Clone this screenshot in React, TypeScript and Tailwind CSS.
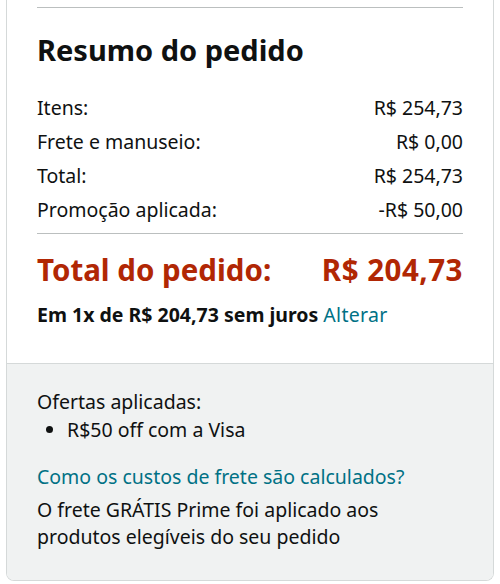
import React from "react";

const rows = [
  { label: "Itens:", value: "R$ 254,73" },
  { label: "Frete e manuseio:", value: "R$ 0,00" },
  { label: "Total:", value: "R$ 254,73" },
  { label: "Promoção aplicada:", value: "-R$ 50,00" },
];

const App = () => {
  return (
    <div
      className="h-[584px] w-[500px] bg-white px-[6px] pb-[3px]"
      style={{ fontFamily: '"Noto Sans", "Open Sans", sans-serif' }}
    >
      <div className="flex h-full flex-col overflow-hidden rounded-b-[8px] border-x border-b border-[#d5d9d9] text-[#0f1111]">
        <div className="px-[30px]">
          <hr className="mt-[7px] border-t border-[#bbbfbf]" />
          <h2 className="mt-[23px] text-[29px] font-bold leading-[38px]">
            Resumo do pedido
          </h2>
          <div className="mt-[22px] flex flex-col">
            {rows.map((row) => (
              <div
                className="flex h-[34px] items-center justify-between text-[19.5px]"
                key={row.label}
              >
                <span>{row.label}</span>
                <span>{row.value}</span>
              </div>
            ))}
          </div>
          <hr className="mt-[6px] border-t border-[#bbbfbf]" />
          <div className="mt-[16px] flex items-center justify-between text-[29.5px] font-bold leading-[40px] text-[#b12704]">
            <span>Total do pedido:</span>
            <span className="tracking-[0.5px]">R$ 204,73</span>
          </div>
          <p className="mt-[12px] text-[19.5px] leading-[26px]">
            <span className="font-bold">Em 1x de R$ 204,73 sem juros</span>{" "}
            <a className="tracking-[0.3px] text-[#007185]">Alterar</a>
          </p>
        </div>
        <div className="mt-[35px] flex-1 border-t border-[#d5d9d9] bg-[#f0f2f2] px-[30px] pt-[24px] text-[19.5px] leading-[28px]">
          <p>Ofertas aplicadas:</p>
          <ul className="list-disc pl-[30px]">
            <li>R$50 off com a Visa</li>
          </ul>
          <p className="mt-[19px] text-[#007185]">
            Como os custos de frete são calculados?
          </p>
          <p className="mt-[5px] leading-[27px]">
            O frete GRÁTIS Prime foi aplicado aos
            <br />
            produtos elegíveis do seu pedido
          </p>
        </div>
      </div>
    </div>
  );
};

export default App;
